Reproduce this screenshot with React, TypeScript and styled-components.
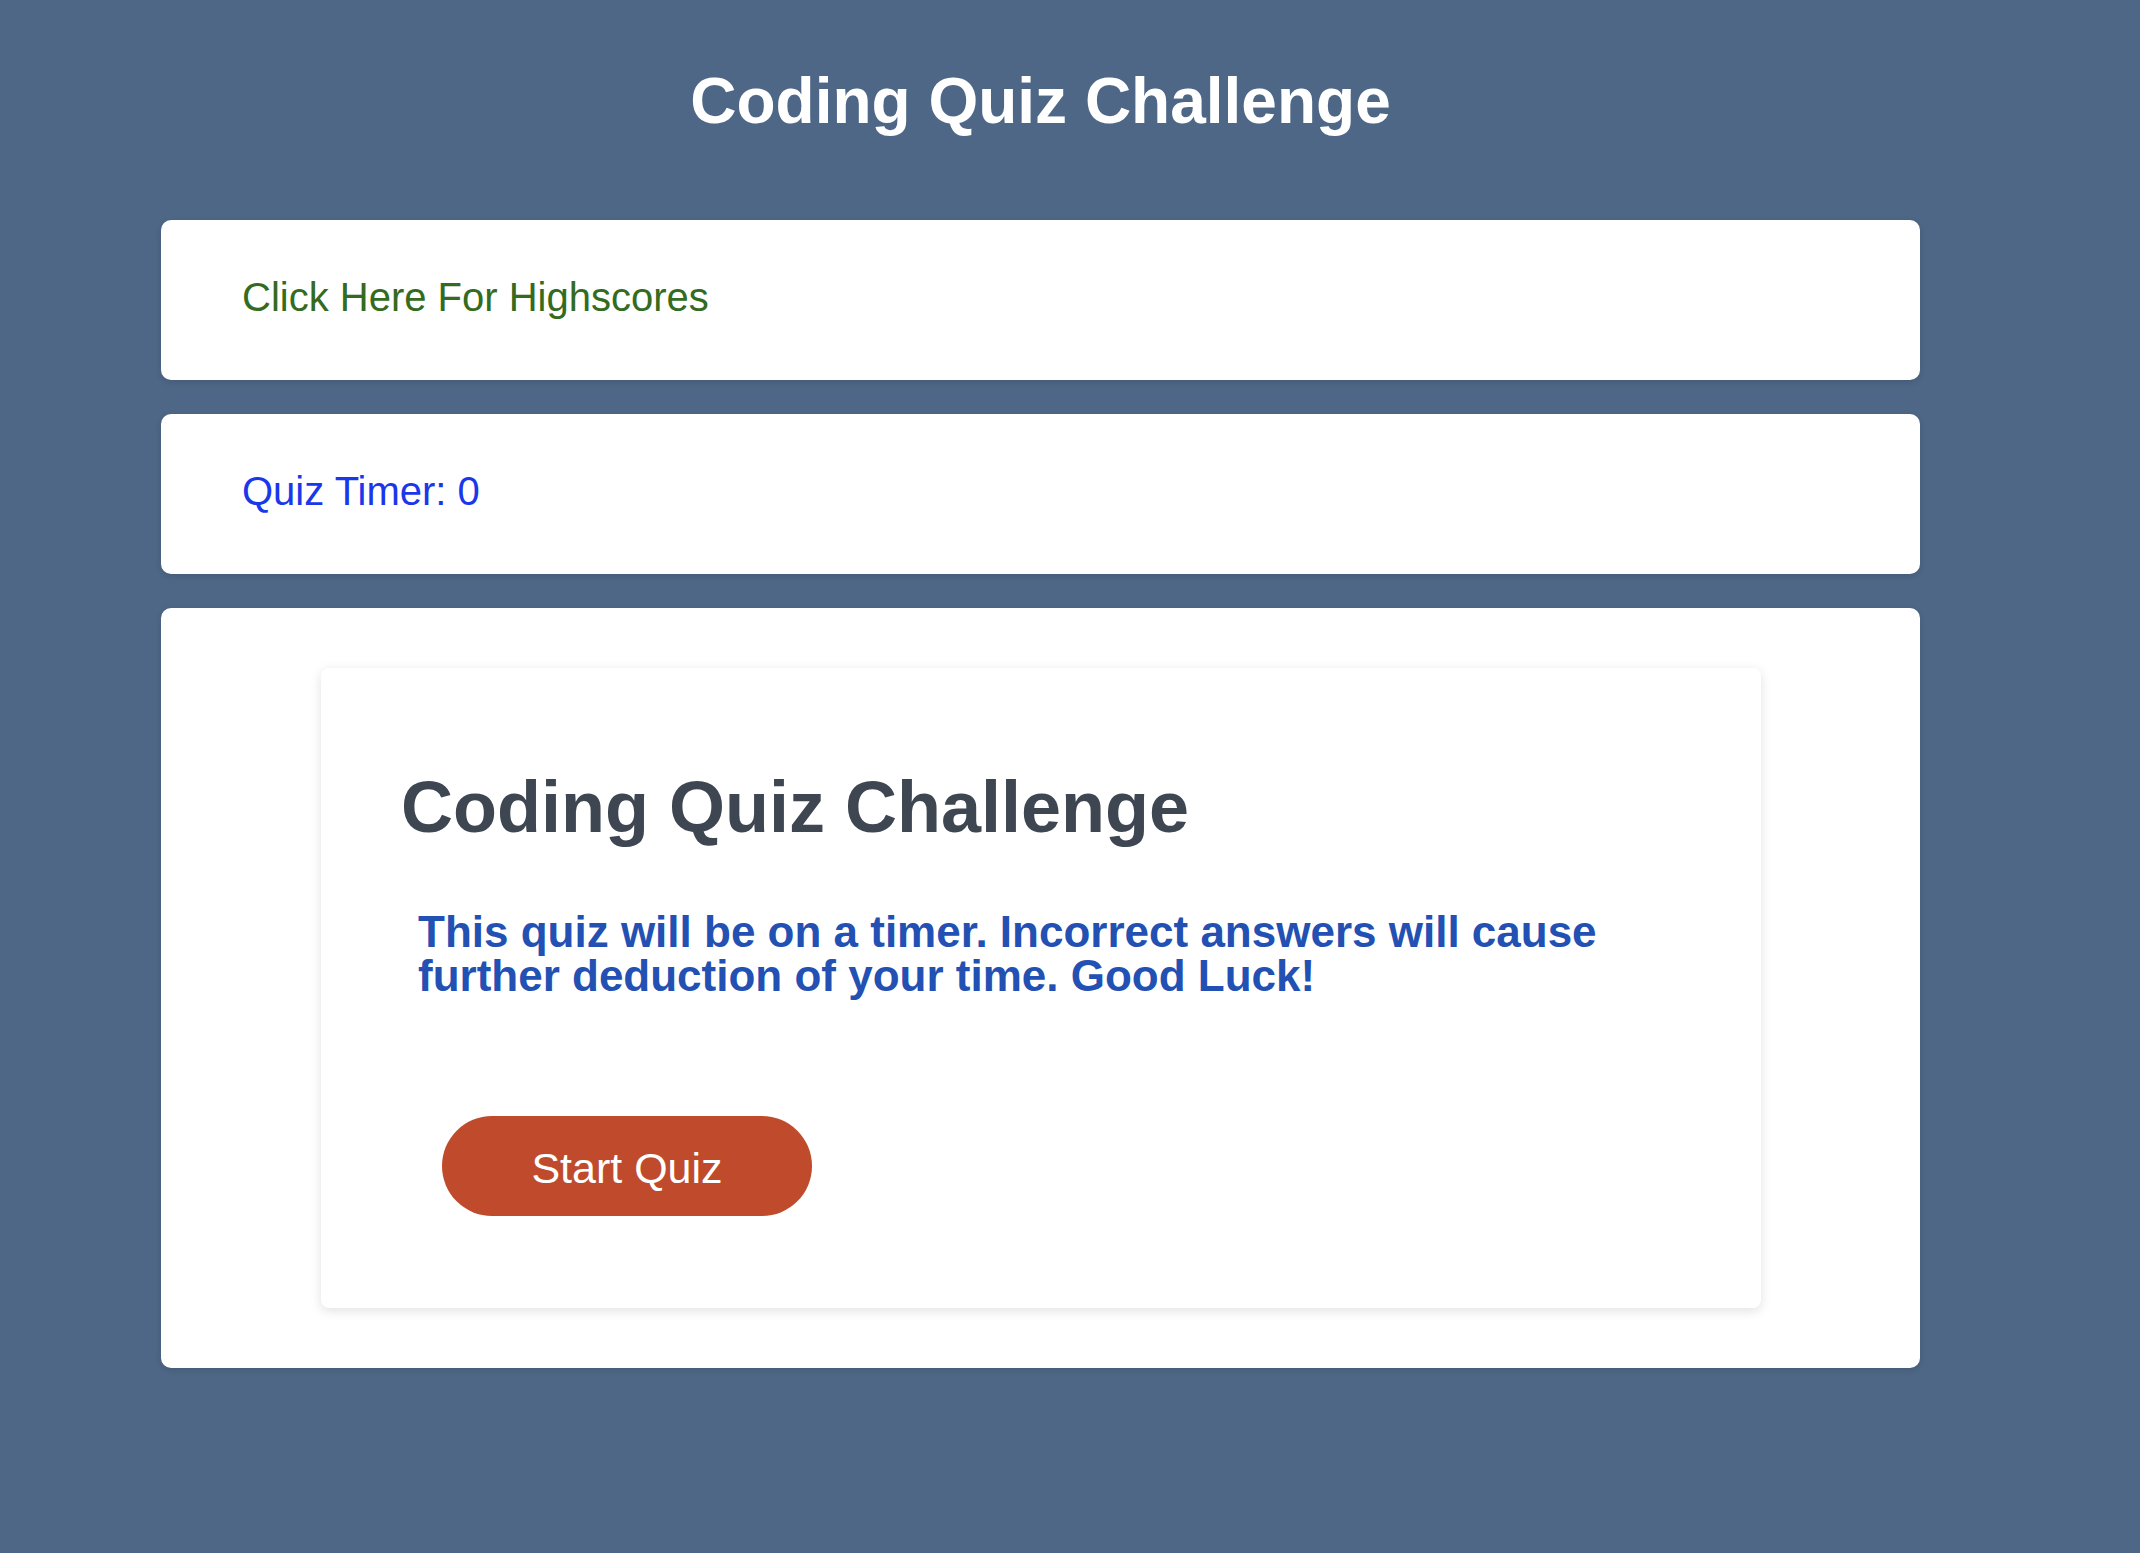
import React from "react";
import styled, { createGlobalStyle } from "styled-components";

const GlobalStyle = createGlobalStyle`
  html, body {
    margin: 0;
    padding: 0;
    background: #4e6786;
    font-family: "Liberation Sans", Arial, Helvetica, sans-serif;
  }
  body {
    min-height: 1553px;
  }
`;

const Page = styled.div`
  width: 1759px;
  margin-left: 161px;
  padding-top: 64px;
  padding-bottom: 120px;
  display: flex;
  flex-direction: column;
`;

const Title = styled.h1`
  margin: 0 0 82px;
  text-align: center;
  color: #ffffff;
  font-size: 64px;
  line-height: 74px;
  font-weight: 700;
`;

const Panel = styled.section<{ $tight?: boolean }>`
  background: #ffffff;
  border-radius: 10px;
  box-shadow: 0 2px 6px rgba(0, 0, 0, 0.12);
  margin-bottom: 34px;
  padding: ${(p) => (p.$tight ? "60px 159px 60px 160px" : "54px 78px 60px 81px")};
`;

const PanelText = styled.div<{ $color: string }>`
  font-size: 40px;
  line-height: 46px;
  color: ${(p) => p.$color};
`;

const QuizCard = styled.div`
  background: #ffffff;
  border-radius: 8px;
  box-shadow: 0 3px 12px rgba(0, 0, 0, 0.12);
  padding: 98px 80px 92px 80px;
  display: flex;
  flex-direction: column;
  align-items: flex-start;
`;

const CardHeading = styled.h2`
  margin: 0;
  font-size: 72px;
  line-height: 83px;
  font-weight: 700;
  color: #3e4651;
`;

const Intro = styled.p`
  margin: 61px 0 0 17px;
  font-size: 44px;
  line-height: 44px;
  font-weight: 700;
  color: #2351b3;
`;

const StartButton = styled.button`
  margin: 118px 0 0 41px;
  width: 370px;
  height: 100px;
  border: none;
  border-radius: 50px;
  background: #bf4b2c;
  color: #ffffff;
  font-family: "Liberation Sans", Arial, Helvetica, sans-serif;
  font-size: 43px;
  cursor: pointer;
  display: flex;
  align-items: center;
  justify-content: center;
  padding: 5px 0 0;
`;

export default function App() {
  return (
    <>
      <GlobalStyle />
      <Page>
        <Title>Coding Quiz Challenge</Title>
        <Panel>
          <PanelText $color="#336b20">Click Here For Highscores</PanelText>
        </Panel>
        <Panel>
          <PanelText $color="#1a37ea">Quiz Timer: 0</PanelText>
        </Panel>
        <Panel $tight>
          <QuizCard>
            <CardHeading>Coding Quiz Challenge</CardHeading>
            <Intro>
              This quiz will be on a timer. Incorrect answers will cause further
              deduction of your time. Good Luck!
            </Intro>
            <StartButton>Start Quiz</StartButton>
          </QuizCard>
        </Panel>
      </Page>
    </>
  );
}
